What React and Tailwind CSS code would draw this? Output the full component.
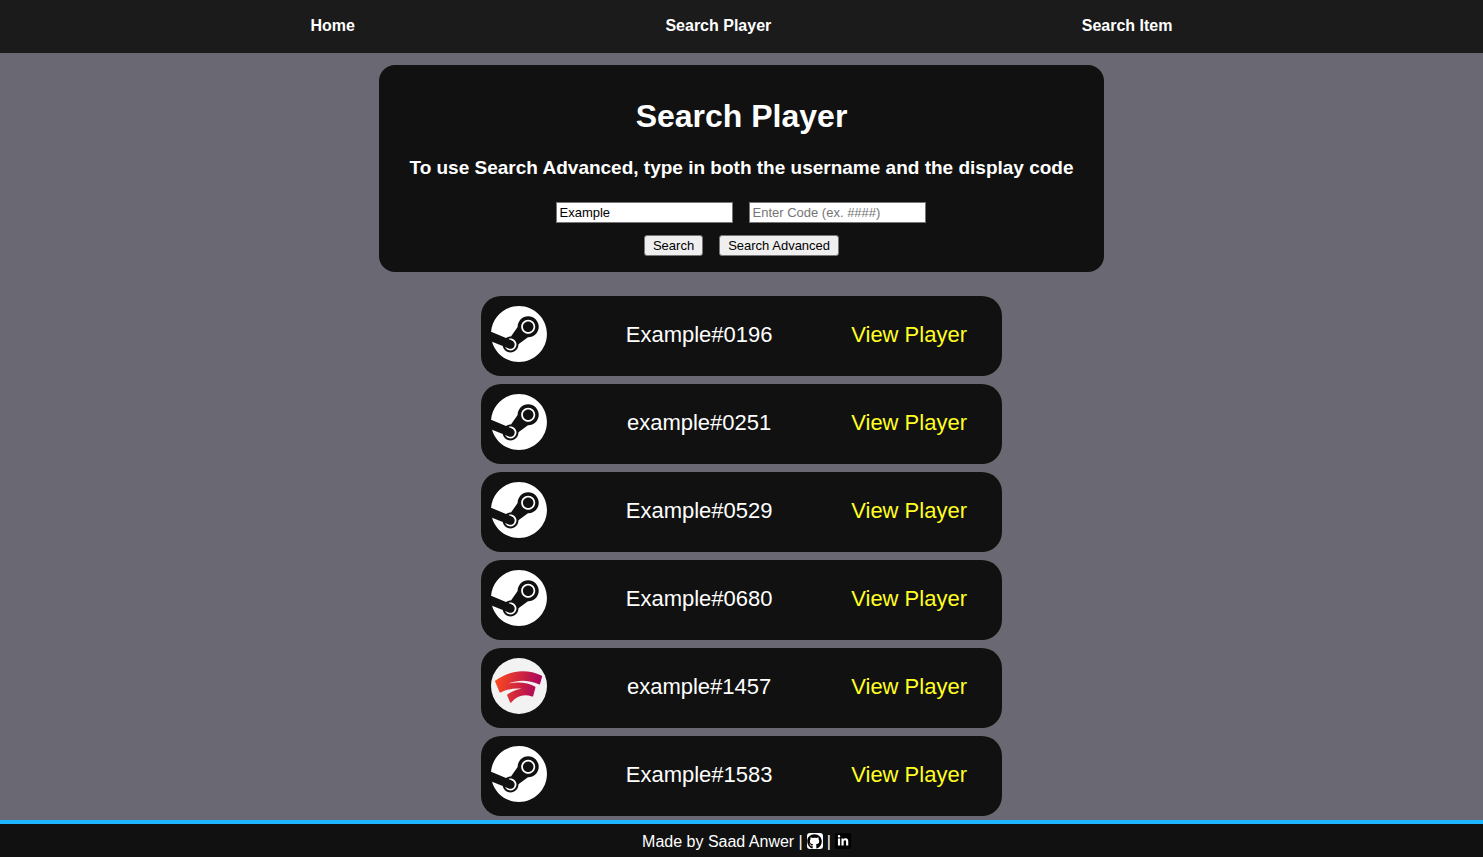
import { SiSteam } from "react-icons/si";
import { FaGithub, FaLinkedinIn } from "react-icons/fa";

const players = [
  { name: "Example#0196", platform: "steam" },
  { name: "example#0251", platform: "steam" },
  { name: "Example#0529", platform: "steam" },
  { name: "Example#0680", platform: "steam" },
  { name: "example#1457", platform: "stadia" },
  { name: "Example#1583", platform: "steam" },
];

function StadiaIcon() {
  return (
    <svg viewBox="0 0 56 56" className="size-14" role="img" aria-label="Stadia">
      <defs>
        <linearGradient id="stadia" x1="4" y1="24" x2="50" y2="34" gradientUnits="userSpaceOnUse">
          <stop offset="0" stopColor="#fc4a1f" />
          <stop offset="1" stopColor="#a4025f" />
        </linearGradient>
      </defs>
      <circle cx="28" cy="28" r="28" fill="#f2f2f2" />
      <path
        fill="url(#stadia)"
        d="M4.400 22.600C13 16.500 22 13.300 31 13.200C38 13.100 44.500 14.600 50.400 17.600Q51.200 18.100 51 18.900L49 25.900Q48.700 26.700 47.800 26.300C38 22 28 21.600 17.500 25.400C28 23.500 37 24.800 43.900 28.400Q44.600 28.900 44.400 29.700L42.200 38Q41.900 38.900 41 38.500C33 35.600 26 37.900 20.200 44.500Q19.500 45.200 19.100 44.300L16.200 37.600Q15.900 36.900 16.500 36.400C20.500 33.400 25 31.600 30.500 30.700C23 29.700 15 31.600 9.700 34.400Q8.800 34.900 8.500 34L4.100 23.600Q3.900 23 4.400 22.600Z"
      />
    </svg>
  );
}

export default function App() {
  return (
    <div className="flex min-h-screen flex-col bg-[#6a6973] font-['Liberation_Sans',Arial,sans-serif] text-white">
      <nav className="flex justify-evenly bg-[#1b1b1b] pt-[17px] pb-[18px] text-base leading-[18px] font-bold">
        <a href="#home">Home</a>
        <a href="#player">Search Player</a>
        <a href="#item">Search Item</a>
      </nav>

      <main className="flex flex-1 flex-col items-center px-2 pt-3 pb-1">
        <form
          className="flex flex-col items-center rounded-2xl bg-[#111] px-[30px] pt-[33px] pb-4"
          onSubmit={(e) => e.preventDefault()}
        >
          <h1 className="text-[32px] leading-9 font-bold">Search Player</h1>
          <h2 className="mt-[23px] text-center text-[19px] leading-[22px] font-bold">
            To use Search Advanced, type in both the username and the display code
          </h2>
          <div className="mt-[23px] flex flex-wrap justify-center gap-4 text-[13px] leading-[15px] text-black">
            <input
              type="text"
              aria-label="Username"
              defaultValue="Example"
              className="h-[21px] w-[177px] border border-[#767676] bg-white px-[2px]"
            />
            <input
              type="text"
              aria-label="Display code"
              placeholder="Enter Code (ex. ####)"
              className="h-[21px] w-[177px] border border-[#767676] bg-white px-[2px] placeholder:text-[#757575]"
            />
          </div>
          <div className="mt-3 flex gap-4 text-[13px] leading-[15px] text-black">
            <button type="submit" className="h-[21px] rounded-[3px] border border-[#767676] bg-[#efefef] px-2">
              Search
            </button>
            <button type="button" className="h-[21px] rounded-[3px] border border-[#767676] bg-[#efefef] px-2">
              Search Advanced
            </button>
          </div>
        </form>

        <ul className="mt-6 flex w-full max-w-[521px] flex-col gap-2">
          {players.map(({ name, platform }) => (
            <li
              key={name}
              className="flex items-start justify-between rounded-[20px] bg-[#111] pt-[10px] pr-[35px] pb-[14px] pl-[10px] text-[22px] leading-[58px]"
            >
              {platform === "steam" ? <SiSteam className="size-14" role="img" aria-label="Steam" /> : <StadiaIcon />}
              <span className="h-14">{name}</span>
              <a href="#view" className="h-14 text-[#ffff22]">View Player</a>
            </li>
          ))}
        </ul>
      </main>

      <footer className="flex items-center justify-center gap-1 border-t-4 border-[#1fb6ff] bg-[#111] pt-[9px] pr-2 pb-[6px] pl-[18px] text-base leading-[18px]">
        <span>Made by Saad Anwer |</span>
        <a href="#github" aria-label="GitHub" className="mb-[2px] flex size-4 items-center justify-center rounded-[3px] bg-white text-black">
          <FaGithub className="size-[15px]" />
        </a>
        <span>|</span>
        <a href="#linkedin" aria-label="LinkedIn" className="mb-[2px] flex size-4 items-center justify-center rounded-[2px] bg-black">
          <FaLinkedinIn className="size-3" />
        </a>
      </footer>
    </div>
  );
}
